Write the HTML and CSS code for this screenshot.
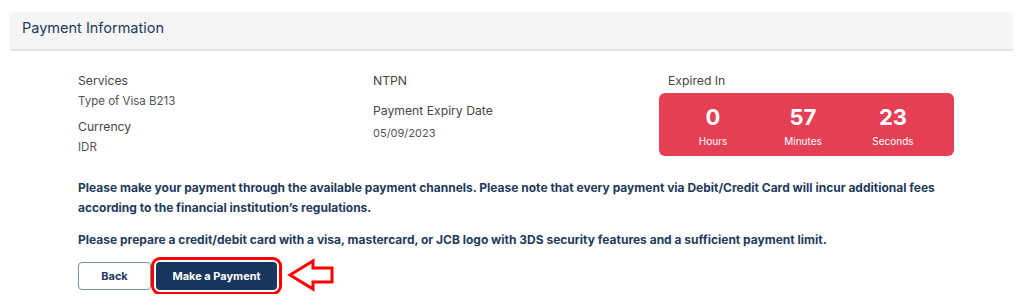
FILE: index.html
```html
<!DOCTYPE html>
<html lang="en">
<head>
    <meta charset="UTF-8">
    <meta name="viewport" content="width=device-width, initial-scale=1.0">
    <title>Payment Information</title>
    <link rel="stylesheet" href="styles.css">
</head>
<body>
    <div class="card">
        <div class="card-header">
            <h2>Payment Information</h2>
        </div>
        <div class="card-body">
            <div class="info-grid">
                <div class="info-col">
                    <div class="label">Services</div>
                    <div class="value">Type of Visa B213</div>
                    <div class="label spaced">Currency</div>
                    <div class="value">IDR</div>
                </div>
                <div class="info-col">
                    <div class="label">NTPN</div>
                    <div class="label spaced-lg">Payment Expiry Date</div>
                    <div class="value date">05/09/2023</div>
                </div>
                <div class="info-col">
                    <div class="label">Expired In</div>
                    <div class="countdown">
                        <div class="count-item">
                            <span class="count-num">0</span>
                            <span class="count-unit">Hours</span>
                        </div>
                        <div class="count-item">
                            <span class="count-num">57</span>
                            <span class="count-unit">Minutes</span>
                        </div>
                        <div class="count-item">
                            <span class="count-num">23</span>
                            <span class="count-unit">Seconds</span>
                        </div>
                    </div>
                </div>
            </div>

            <p class="notice">Please make your payment through the available payment channels. Please note that every payment via Debit/Credit Card will incur additional fees according to the financial institution’s regulations.</p>
            <p class="notice">Please prepare a credit/debit card with a visa, mastercard, or JCB logo with 3DS security features and a sufficient payment limit.</p>

            <div class="actions">
                <button class="btn btn-outline">Back</button>
                <button class="btn btn-primary highlight">Make a Payment</button>
                <svg class="pointer" viewBox="0 0 48 36" width="48" height="36">
                    <polygon points="3,17 26,3 26,10 45,10 45,24 26,24 26,31" fill="none" stroke="#ff0000" stroke-width="3" stroke-linejoin="miter"></polygon>
                </svg>
            </div>
        </div>
    </div>
</body>
</html>
```

FILE: styles.css
```css
body {
    margin: 0;
    padding: 12px 11px 0 10px;
    font-family: 'Inter', 'Noto Sans', sans-serif;
    background-color: #fff;
}

.card {
    background: #fff;
}

.card-header {
    background-color: #f5f5f5;
    border-radius: 5px 5px 0 0;
    border-bottom: 2px solid #e4e4e4;
    height: 39px;
    box-sizing: border-box;
    padding: 7px 12px 0;
}

.card-header h2 {
    margin: 0;
    font-size: 14.5px;
    line-height: 18px;
    font-weight: 400;
    color: #1f3a5c;
}

.card-body {
    padding: 20px 0 0 68px;
}

.info-grid {
    display: grid;
    grid-template-columns: 295px 295px 295px;
}

.label {
    font-size: 12.2px;
    line-height: 20px;
    color: #464646;
}

.value {
    font-size: 11.5px;
    line-height: 16px;
    margin-top: 2px;
    color: #555;
}

.date {
    font-size: 11px;
    margin-top: 4px;
}

.spaced {
    margin-top: 8px;
}

.spaced-lg {
    margin-top: 10px;
}

.countdown {
    margin: 2px 0 0 -9px;
    width: 295px;
    height: 63px;
    box-sizing: border-box;
    padding: 2px 0 0 9px;
    background-color: #e43f55;
    border-radius: 6px;
    display: flex;
    align-items: center;
}

.count-item {
    width: 90px;
    display: flex;
    flex-direction: column;
    align-items: center;
    color: #fff;
}

.count-num {
    font-size: 22px;
    font-weight: 700;
    line-height: 26px;
}

.count-unit {
    font-size: 10px;
    line-height: 14px;
    margin-top: 4px;
}

.notice {
    margin: 12px 0 0;
    max-width: 880px;
    font-size: 12px;
    font-weight: 700;
    line-height: 20px;
    color: #1f3a5c;
}

.notice:first-of-type {
    margin-top: 22px;
}

.actions {
    margin-top: 8px;
    display: flex;
    align-items: center;
    gap: 5px;
}

.btn {
    height: 28px;
    border-radius: 4px;
    font-family: inherit;
    font-size: 11px;
    font-weight: 700;
    cursor: pointer;
}

.btn-outline {
    width: 73px;
    background: #fff;
    border: 1px solid #7d8ea5;
    color: #1f3a5c;
}

.btn-primary {
    width: 121px;
    background-color: #17365d;
    border: none;
    color: #fff;
}

.highlight {
    outline: 3px solid #ff0000;
    outline-offset: 2px;
}

.pointer {
    margin-left: 5px;
}
```
